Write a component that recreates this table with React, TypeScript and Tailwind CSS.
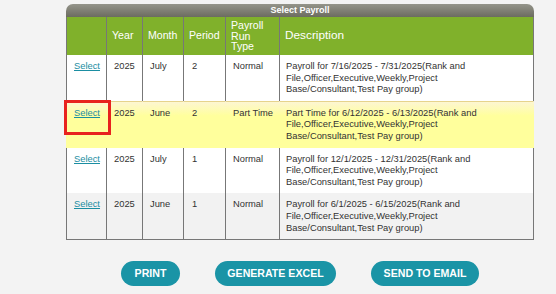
import React from 'react';

type PayrollRow = {
  year: string;
  month: string;
  period: string;
  runType: string;
  description: string;
  selected?: boolean;
  shaded?: boolean;
};

const rows: PayrollRow[] = [
  {
    year: '2025',
    month: 'July',
    period: '2',
    runType: 'Normal',
    description: 'Payroll for 7/16/2025 - 7/31/2025(Rank and File,Officer,Executive,Weekly,Project Base/Consultant,Test Pay group)',
  },
  {
    year: '2025',
    month: 'June',
    period: '2',
    runType: 'Part Time',
    description: 'Part Time for 6/12/2025 - 6/13/2025(Rank and File,Officer,Executive,Weekly,Project Base/Consultant,Test Pay group)',
    selected: true,
  },
  {
    year: '2025',
    month: 'July',
    period: '1',
    runType: 'Normal',
    description: 'Payroll for 12/1/2025 - 12/31/2025(Rank and File,Officer,Executive,Weekly,Project Base/Consultant,Test Pay group)',
  },
  {
    year: '2025',
    month: 'June',
    period: '1',
    runType: 'Normal',
    description: 'Payroll for 6/1/2025 - 6/15/2025(Rank and File,Officer,Executive,Weekly,Project Base/Consultant,Test Pay group)',
    shaded: true,
  },
];

function rowBg(row: PayrollRow) {
  if (row.selected) return 'bg-[linear-gradient(#fdf6d2,#ffff9c_30%)] border-t border-t-[#e6d38c]';
  if (row.shaded) return 'bg-[#f2f2f2]';
  return 'bg-white';
}

export default function App() {
  return (
    <div className="min-h-screen bg-[#f3f3f3] font-['Liberation_Sans',Arial,sans-serif] text-[#333]">
      <div className="w-[468px] pl-0 pt-[4px] ml-[66px]">
        <div className="h-[13px] rounded-t-[7px] bg-[linear-gradient(#94948a,#6c6c60)] text-center text-[9px] font-bold leading-[13px] text-white">
          Select Payroll
        </div>
        <table className="w-full table-fixed border-separate border-spacing-0">
          <colgroup>
            <col className="w-[40px]" />
            <col className="w-[36px]" />
            <col className="w-[41px]" />
            <col className="w-[42px]" />
            <col className="w-[54px]" />
            <col />
          </colgroup>
          <thead>
            <tr className="h-[38px] bg-[#80b12b] text-left align-middle text-[10.6px] font-normal text-white">
              <th className="border-l border-[#777] px-[6px] font-normal"></th>
              <th className="border-l border-[#777] px-[5px] font-normal">Year</th>
              <th className="border-l border-[#777] px-[5px] font-normal">Month</th>
              <th className="border-l border-[#777] px-[5px] font-normal">Period</th>
              <th className="border-l border-[#777] px-[5px] font-normal leading-[10.5px]">Payroll Run Type</th>
              <th className="border-x border-[#777] px-[5px] text-[11.8px] font-normal">Description</th>
            </tr>
          </thead>
          <tbody className="text-[9.35px] leading-[11.6px]">
            {rows.map((row, i) => {
              const last = i === rows.length - 1;
              const line = row.selected ? 'border-l-transparent' : 'border-l-[#777]';
              const bottom = last ? 'border-b border-b-[#777]' : '';
              const cell = `border-l ${line} ${bottom} ${rowBg(row)} align-top pt-[6px] pb-[5px] px-[7px]`;
              return (
                <tr key={i} className="h-[45px]">
                  <td className={`${cell} relative px-0 text-center`}>
                    <a href="#" className="text-[#1b8ea2] underline">Select</a>
                    {row.selected && (
                      <span className="pointer-events-none absolute left-[-3px] top-[-2px] h-[35px] w-[47px] border-[3px] border-[#e8221e]" />
                    )}
                  </td>
                  <td className={cell}>{row.year}</td>
                  <td className={cell}>{row.month}</td>
                  <td className={`${cell} pl-[8px]`}>{row.period}</td>
                  <td className={`${cell} whitespace-nowrap pl-[7px]`}>{row.runType}</td>
                  <td
                    className={`${cell} border-r ${row.selected ? 'border-r-transparent' : 'border-r-[#777]'} pr-[50px] pl-[6px]`}
                  >
                    {row.description}
                  </td>
                </tr>
              );
            })}
          </tbody>
        </table>

        <div className="mt-[21px] flex justify-center gap-[35px]">
          <button className="h-[25px] w-[59px] rounded-full bg-[#1a94a6] text-[10.6px] font-bold text-white">PRINT</button>
          <button className="h-[25px] w-[121px] rounded-full bg-[#1a94a6] text-[10.6px] font-bold text-white">GENERATE EXCEL</button>
          <button className="h-[25px] w-[108px] rounded-full bg-[#1a94a6] text-[10.6px] font-bold text-white">SEND TO EMAIL</button>
        </div>
      </div>
    </div>
  );
}
